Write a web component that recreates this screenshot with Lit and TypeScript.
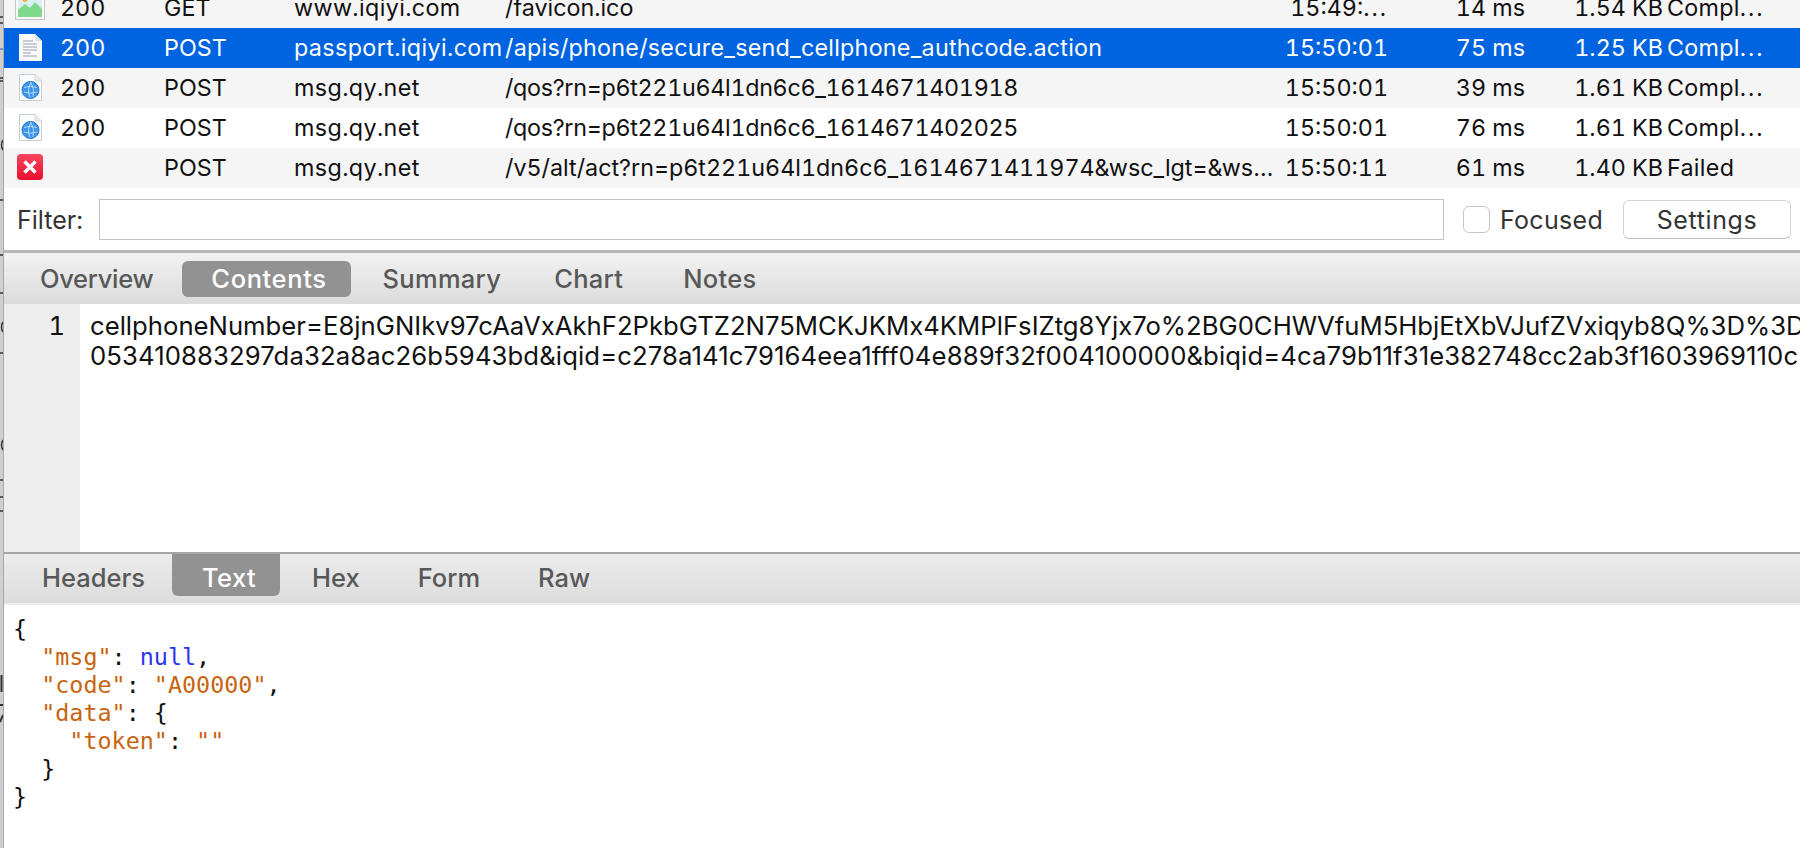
import { LitElement, html, css, svg } from "lit";
import { customElement } from "lit/decorators.js";

type Row = { icon: string; status: string; method: string; host: string; path: string; pathCls: string; time: string; dur: string; size: string; state: string; cls: string };

const rows: Row[] = [
  { icon: "image", status: "200", method: "GET", host: "www.iqiyi.com", path: "/favicon.ico", pathCls: "", time: "15:49:...", dur: "14 ms", size: "1.54 KB", state: "Compl...", cls: "alt" },
  { icon: "doc", status: "200", method: "POST", host: "passport.iqiyi.com", path: "/apis/phone/secure_send_cellphone_authcode.action", pathCls: "wide", time: "15:50:01", dur: "75 ms", size: "1.25 KB", state: "Compl...", cls: "sel" },
  { icon: "globe", status: "200", method: "POST", host: "msg.qy.net", path: "/qos?rn=p6t221u64l1dn6c6_1614671401918", pathCls: "tight", time: "15:50:01", dur: "39 ms", size: "1.61 KB", state: "Compl...", cls: "alt" },
  { icon: "globe", status: "200", method: "POST", host: "msg.qy.net", path: "/qos?rn=p6t221u64l1dn6c6_1614671402025", pathCls: "tight", time: "15:50:01", dur: "76 ms", size: "1.61 KB", state: "Compl...", cls: "" },
  { icon: "error", status: "", method: "POST", host: "msg.qy.net", path: "/v5/alt/act?rn=p6t221u64l1dn6c6_1614671411974&wsc_lgt=&ws…", pathCls: "", time: "15:50:11", dur: "61 ms", size: "1.40 KB", state: "Failed", cls: "alt" },
];

const paper = svg`<path d="M1.5 .5H17L23.5 7V26.5H1.5Z" fill="#fbfcfe" stroke="#c9ced6"/><path d="M17 .5V7H23.5" fill="#e6e9ee" stroke="#d4d8de"/>`;

const icons: Record<string, unknown> = {
  image: html`<svg class="ico image" width="30" height="27" viewBox="0 0 30 27">
    <rect x=".5" y=".5" width="29" height="26" fill="#fafafa" stroke="#c4c6c8"/>
    <rect x="3" y="2" width="24" height="22" fill="#d8f0f2"/>
    <circle cx="10" cy="6" r="3" fill="#f5b13d"/>
    <path d="M3 24V17L10 11L15 15L20 9L27 16V24Z" fill="#7fd98a"/>
  </svg>`,
  doc: html`<svg class="ico" width="25" height="27" viewBox="0 0 25 27">
    <path d="M1 0H17L24 7V27H1Z" fill="#f9fafc"/><path d="M17 0V7H24Z" fill="#dfe3e8"/>
    <path d="M5 7H15M5 10H19M5 13H19M5 16H19M5 19H13M5 22H19" stroke="#9aa0a8" stroke-width="1"/>
  </svg>`,
  globe: html`<svg class="ico" width="25" height="27" viewBox="0 0 25 27">
    ${paper}
    <circle cx="12.5" cy="16" r="8.5" fill="#3d95ea"/>
    <circle cx="12.5" cy="16" r="8.5" fill="none" stroke="#2477d0"/>
    <path d="M6 13.5Q12.5 11 19 13.5M5.5 18Q12.5 20.5 19.5 18M13 8.5Q8.5 16 12 23.5M13 8.5Q17 15 15 23" fill="none" stroke="#cfe6fb" stroke-width=".8"/>
  </svg>`,
  error: html`<svg class="ico err" width="26" height="26" viewBox="0 0 26 26">
    <defs><linearGradient id="rg" x1="0" y1="0" x2="0" y2="1"><stop offset="0" stop-color="#f8455f"/><stop offset="1" stop-color="#e8102e"/></linearGradient></defs>
    <rect width="26" height="26" rx="4" fill="url(#rg)"/>
    <path d="M7.5 7.5L18.5 18.5M18.5 7.5L7.5 18.5" stroke="#fff" stroke-width="3.4"/>
  </svg>`,
};

const dots = (s: string) => s.endsWith("...")
  ? html`${s.slice(0, -3)}<span class="dots">...</span>`
  : s;

@customElement("app-root")
export class AppRoot extends LitElement {
  static styles = css`
    :host { display: block; width: 1800px; height: 848px; overflow: hidden; background: #fff; font-family: Inter, "Liberation Sans", sans-serif; color: #111; font-variant-numeric: tabular-nums; }
    .shell { display: flex; height: 848px; }
    .edge { flex: 0 0 4px; background: #cfcfcf; border-right: 1px solid #a9a9a9; box-sizing: border-box; }
    .edge svg { display: block; }
    .win { flex: 1; min-width: 0; display: flex; flex-direction: column; }
    .list { height: 188px; display: flex; flex-direction: column; justify-content: flex-end; overflow: hidden; flex: none; }
    .row { flex: 0 0 40px; display: grid; grid-template-columns: 56px 104px 130px 211px 775px 108px 137px 138px 137px; align-items: center; font-size: 23.3px; padding-bottom: 2px; box-sizing: border-box; background: #fff; white-space: nowrap; }
    .row.alt { background: #f5f5f5; }
    .row.sel { background: #0064e0; color: #fff; }
    .row > div { overflow: hidden; }
    .right { text-align: right; }
    .state { padding-left: 4px; letter-spacing: .3px; }
    .dots { letter-spacing: 2px; }
    .host { letter-spacing: .38px; }
    .wide { letter-spacing: .25px; }
    .tight { letter-spacing: -.3px; }
    .iconcell { height: 27px; padding-left: 14px; overflow: visible !important; }
    .ico { display: block; }
    .ico.image { margin-left: -3px; margin-top: -1px; }
    .ico.err { margin-left: -1px; }
    .filter { flex: 0 0 65px; display: flex; align-items: center; box-sizing: border-box; padding: 1px 9px 0 13px; font-size: 25px; color: #333; border-bottom: 3px solid #b8b8b8; }
    .filter label { width: 82px; }
    .input { width: 1345px; height: 41px; box-sizing: border-box; background: #fff; border: 1px solid #c4c4c4; }
    .check { width: 27px; height: 27px; box-sizing: border-box; margin-left: 19px; background: #fff; border: 1px solid #c6c6c6; border-radius: 6px; }
    .focused { flex: 0 0 123px; margin-left: 10px; letter-spacing: .3px; }
    .btn { width: 168px; height: 39px; box-sizing: border-box; background: #fff; border: 1px solid #d4d4d4; border-bottom-color: #bcbcbc; border-radius: 6px; display: flex; align-items: center; justify-content: center; letter-spacing: .6px; }
    .tabs { flex: none; display: flex; align-items: center; box-sizing: border-box; font-size: 25.5px; font-weight: 500; color: #585858; background: linear-gradient(#f2f2f2, #dbdbdb); }
    .t1 { height: 51px; padding-left: 31px; }
    .t1 .tab { height: 36px; letter-spacing: .3px; }
    .t1 .tab:nth-child(1) { padding: 0 29px 0 5px; letter-spacing: -.3px; }
    .t1 .tab:nth-child(2) { padding: 0 24px 0 29px; letter-spacing: .6px; }
    .t1 .tab:nth-child(3) { padding: 0 27px 0 32px; }
    .t1 .tab:nth-child(4) { padding: 0 29px 0 26px; }
    .t1 .tab:nth-child(5) { padding: 0 0 0 31px; }
    .t2 { height: 53px; padding-left: 38px; background: linear-gradient(#ececec, #dcdcdc); align-items: flex-start; border-bottom: 2px solid #ececec; border-top: 2px solid #a6a6a6; }
    .t2 .tab { height: 42px; padding-top: 5px; }
    .t2 .tab:nth-child(1) { padding-left: 0; padding-right: 27px; }
    .t2 .tab:nth-child(2) { padding-left: 30px; padding-right: 24px; letter-spacing: .4px; }
    .t2 .tab:nth-child(3) { padding-left: 32px; padding-right: 28px; }
    .t2 .tab:nth-child(4) { padding-left: 30px; padding-right: 29px; }
    .t2 .tab:nth-child(5) { padding-left: 29px; }
    .tab { display: flex; align-items: center; box-sizing: border-box; }
    .tab.on { background: #929292; color: #fff; border-radius: 6px; }
    .t2 .tab.on { border-radius: 0 0 6px 6px; }
    .content { flex: 0 0 248px; display: flex; min-height: 0; }
    .gutter { flex: 0 0 76px; background: #eeeeee; box-sizing: border-box; padding: 7px 15px 0 0; text-align: right; font-size: 25.5px; line-height: 30px; }
    .text { flex: 1; min-width: 0; overflow: hidden; padding: 7px 0 0 10px; font-size: 25.7px; line-height: 30px; white-space: nowrap; font-variant-numeric: normal; }
    .line2 { letter-spacing: .1px; }
    .json { flex: 1; margin: 0; padding: 10px 0 0 9px; font: 23.4px/28px "DejaVu Sans Mono", monospace; color: #111; }
    .str { color: #c9640f; }
    .kw { color: #2b35f0; }
  `;

  render() {
    return html`<div class="shell">
      <div class="edge">
        <svg width="3" height="848" viewBox="0 0 3 848">
          <path d="M0 17H3M0 23H3M0 78H3M0 81H3M0 200H3M0 255H3M0 293H3M0 353H3M0 480H3M0 497H3M0 511H3" stroke="#333" stroke-width="1.5"/>
          <path d="M0 49H3" stroke="#5d86c0" stroke-width="1.5"/>
          <path d="M3 140Q0 145 3 150M3 322Q0 327 3 332M3 440Q0 445 3 450" fill="none" stroke="#333" stroke-width="1.5"/>
          <path d="M1.5 675V692M0 705H3M0 722L3 715" stroke="#333" stroke-width="2"/>
        </svg>
      </div>
      <div class="win">
        <div class="list">
          ${rows.map(r => html`<div class="row ${r.cls}">
            <div class="iconcell">${icons[r.icon]}</div>
            <div>${r.status}</div><div>${r.method}</div><div class="host">${r.host}</div><div class="${r.pathCls}">${r.path}</div>
            <div class="right">${dots(r.time)}</div><div class="right">${r.dur}</div><div class="right">${r.size}</div><div class="state">${dots(r.state)}</div>
          </div>`)}
        </div>
        <div class="filter">
          <label>Filter:</label>
          <div class="input"></div>
          <div class="check"></div>
          <span class="focused">Focused</span>
          <div class="btn">Settings</div>
        </div>
        <div class="tabs t1">
          <div class="tab">Overview</div><div class="tab on">Contents</div><div class="tab">Summary</div><div class="tab">Chart</div><div class="tab">Notes</div>
        </div>
        <div class="content">
          <div class="gutter">1</div>
          <div class="text"><div>cellphoneNumber=E8jnGNIkv97cAaVxAkhF2PkbGTZ2N75MCKJKMx4KMPlFsIZtg8Yjx7o%2BG0CHWVfuM5HbjEtXbVJufZVxiqyb8Q%3D%3D</div><div class="line2">053410883297da32a8ac26b5943bd&amp;iqid=c278a141c79164eea1fff04e889f32f004100000&amp;biqid=4ca79b11f31e382748cc2ab3f1603969110c</div></div>
        </div>
        <div class="tabs t2">
          <div class="tab">Headers</div><div class="tab on">Text</div><div class="tab">Hex</div><div class="tab">Form</div><div class="tab">Raw</div>
        </div>
        <pre class="json">{
  <span class="str">"msg"</span>: <span class="kw">null</span>,
  <span class="str">"code"</span>: <span class="str">"A00000"</span>,
  <span class="str">"data"</span>: {
    <span class="str">"token"</span>: <span class="str">""</span>
  }
}</pre>
      </div>
    </div>`;
  }
}
